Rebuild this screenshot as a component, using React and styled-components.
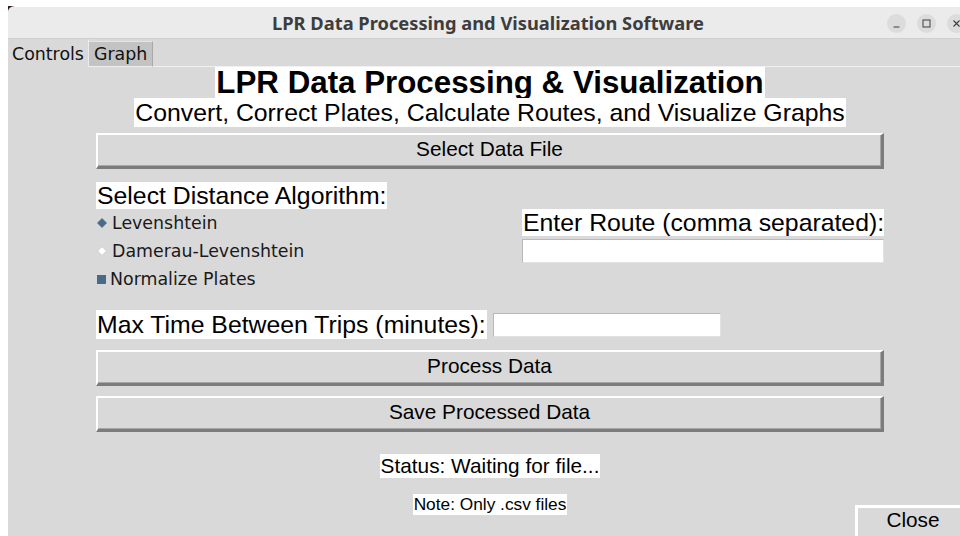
import React from 'react'
import styled, { createGlobalStyle } from 'styled-components'

const GlobalStyle = createGlobalStyle`
  html, body {
    margin: 0;
    padding: 0;
    background: #ffffff;
  }
  body {
    width: 960px;
    height: 536px;
    overflow: hidden;
  }
`

const Screen = styled.div`
  width: 960px;
  height: 536px;
  overflow: hidden;
  background: #ffffff;
  padding: 7px 0 0 8px;
  box-sizing: border-box;
`

const Window = styled.div`
  position: relative;
  width: 960px;
  height: 540px;
  background: #d9d9d9;
  display: flex;
  flex-direction: column;
`

const Corner = styled.svg`
  position: absolute;
  top: -1px;
  left: 0;
`

const TitleBar = styled.div`
  height: 31px;
  flex: none;
  background: #ebebeb;
  border-bottom: 1px solid #cfcfcf;
  display: grid;
  grid-template-columns: 1fr auto 1fr;
  align-items: center;
`

const WindowTitle = styled.div`
  grid-column: 2;
  font-family: "Noto Sans", "DejaVu Sans", sans-serif;
  font-weight: 700;
  font-size: 18.3px;
  color: #3d3d3d;
  white-space: nowrap;
`

const WindowButtons = styled.div`
  grid-column: 3;
  justify-self: end;
  display: flex;
  gap: 11px;
  padding: 2px 2px 0 0;
`

const RoundButton = styled.div`
  width: 19px;
  height: 19px;
  border-radius: 50%;
  background: #dcdcdc;
  display: flex;
  align-items: center;
  justify-content: center;
`

const TabStrip = styled.div`
  height: 28px;
  flex: none;
  display: flex;
  align-items: flex-end;
  box-shadow: inset 0 -1px 0 #f0f0f0;
`

const Tab = styled.div`
  height: ${p => (p.$active ? 28 : 26)}px;
  box-sizing: border-box;
  padding: 0 ${p => (p.$active ? 4 : 5)}px;
  background: ${p => (p.$active ? '#d9d9d9' : '#c3c3c3')};
  border-top: 1px solid ${p => (p.$active ? '#d9d9d9' : '#e4e4e4')};
  border-right: 1px solid ${p => (p.$active ? '#ececec' : '#a9a9a9')};
  border-bottom: ${p => (p.$active ? 'none' : '1px solid #f0f0f0')};
  font-family: "DejaVu Sans", sans-serif;
  font-size: 17.4px;
  color: #111;
  display: flex;
  align-items: center;
`

const Content = styled.div`
  flex: 1;
  display: flex;
  flex-direction: column;
  align-items: center;
  padding: 0 84px 0 88px;
`

const Heading = styled.div`
  background: #ffffff;
  font-family: "Liberation Sans", Arial, sans-serif;
  font-weight: 700;
  font-size: 31.3px;
  line-height: 31px;
  height: 31px;
  padding: 0 1px;
  color: #000;
  white-space: nowrap;
`

const Subheading = styled.div`
  background: #ffffff;
  font-family: "Liberation Sans", Arial, sans-serif;
  font-size: 24.8px;
  line-height: 29px;
  height: 29px;
  padding: 0 1px;
  color: #000;
  white-space: nowrap;
`

const RaisedButton = styled.div`
  align-self: stretch;
  height: 36px;
  margin-top: ${p => p.$gap}px;
  box-sizing: border-box;
  background: #d9d9d9;
  border-style: solid;
  border-width: 2px 3px 3px 2px;
  border-color: #ffffff #7c7c7c #7c7c7c #ffffff;
  box-shadow: inset -1px -1px 0 #a6a6a6;
  display: flex;
  align-items: center;
  justify-content: center;
  padding-bottom: 3px;
  font-family: "Liberation Sans", Arial, sans-serif;
  font-size: 20.8px;
  color: #000;
`

const Middle = styled.div`
  align-self: stretch;
  margin-top: 13px;
  display: flex;
  justify-content: space-between;
  align-items: flex-start;
`

const LeftColumn = styled.div`
  display: flex;
  flex-direction: column;
  align-items: flex-start;
`

const RightColumn = styled.div`
  width: 362px;
  padding-top: 27px;
  display: flex;
  flex-direction: column;
  align-items: stretch;
`

const FieldLabel = styled.div`
  background: #ffffff;
  font-family: "Liberation Sans", Arial, sans-serif;
  font-size: 24.8px;
  line-height: ${p => p.$h || 27}px;
  height: ${p => p.$h || 27}px;
  padding: 0 1px;
  color: #000;
  white-space: nowrap;
`

const Option = styled.div`
  height: 28px;
  display: flex;
  align-items: center;
  gap: ${p => (p.$check ? 4 : 5)}px;
  padding-left: 1px;
  font-family: "DejaVu Sans", sans-serif;
  font-size: 17.4px;
  color: #1a1a1a;
`

const Entry = styled.div`
  height: 24px;
  width: ${p => (p.$w ? `${p.$w}px` : 'auto')};
  margin-top: ${p => p.$top || 0}px;
  box-sizing: border-box;
  background: #ffffff;
  border: 1px solid #b9b9b9;
  border-right-color: #e2e2e2;
  border-bottom-color: #e2e2e2;
`

const TimeRow = styled.div`
  align-self: stretch;
  margin-top: 17px;
  display: flex;
  align-items: center;
  gap: 6px;
`

const Status = styled.div`
  margin-top: ${p => p.$gap}px;
  background: #ffffff;
  font-family: "Liberation Sans", Arial, sans-serif;
  font-size: ${p => p.$size}px;
  line-height: ${p => p.$h}px;
  height: ${p => p.$h}px;
  padding: 0 1px;
  color: #000;
  white-space: nowrap;
`

const CloseButton = styled.div`
  position: absolute;
  left: 847px;
  top: 498px;
  width: 113px;
  height: 36px;
  box-sizing: border-box;
  background: #d9d9d9;
  border-top: 3px solid #ffffff;
  border-left: 3px solid #ffffff;
  display: flex;
  justify-content: center;
  font-family: "Liberation Sans", Arial, sans-serif;
  font-size: 20.8px;
  line-height: 24px;
  color: #000;
`

const Diamond = ({ filled }) => (
  <svg width="10" height="10" viewBox="0 0 10 10">
    <path
      d="M5 0.5 L9.5 5 L5 9.5 L0.5 5 Z"
      fill={filled ? '#4a6a88' : '#ffffff'}
      stroke={filled ? '#4a6a88' : '#c8c8c8'}
      strokeWidth="0.8"
    />
  </svg>
)

const Square = () => (
  <svg width="9" height="9" viewBox="0 0 9 9">
    <rect x="0.5" y="0.5" width="8" height="8" fill="#4a6a88" stroke="#3e5a76" strokeWidth="0.8" />
  </svg>
)

const App = () => (
  <Screen>
    <GlobalStyle />
    <Window>
      <Corner width="8" height="5" viewBox="0 0 8 5">
        <path d="M0 0 H7 Q1 0.5 0 5 Z" fill="#2e1b2b" />
      </Corner>

      <TitleBar>
        <WindowTitle>LPR Data Processing and Visualization Software</WindowTitle>
        <WindowButtons>
          <RoundButton>
            <svg width="9" height="9" viewBox="0 0 9 9">
              <path d="M1.5 8 H7.5" stroke="#3c3c3c" strokeWidth="1" />
            </svg>
          </RoundButton>
          <RoundButton>
            <svg width="9" height="9" viewBox="0 0 9 9">
              <rect x="1" y="1" width="7" height="7" fill="none" stroke="#3c3c3c" strokeWidth="1" />
            </svg>
          </RoundButton>
          <RoundButton>
            <svg width="9" height="9" viewBox="0 0 9 9">
              <path d="M1.5 1.5 L7.5 7.5 M7.5 1.5 L1.5 7.5" stroke="#3c3c3c" strokeWidth="1.1" />
            </svg>
          </RoundButton>
        </WindowButtons>
      </TitleBar>

      <TabStrip>
        <Tab $active>Controls</Tab>
        <Tab>Graph</Tab>
      </TabStrip>

      <Content>
        <Heading>LPR Data Processing &amp; Visualization</Heading>
        <Subheading>Convert, Correct Plates, Calculate Routes, and Visualize Graphs</Subheading>

        <RaisedButton $gap={6}>Select Data File</RaisedButton>

        <Middle>
          <LeftColumn>
            <FieldLabel>Select Distance Algorithm:</FieldLabel>
            <Option>
              <Diamond filled />
              Levenshtein
            </Option>
            <Option>
              <Diamond />
              Damerau-Levenshtein
            </Option>
            <Option $check>
              <Square />
              Normalize Plates
            </Option>
          </LeftColumn>
          <RightColumn>
            <FieldLabel>Enter Route (comma separated):</FieldLabel>
            <Entry $top={3} />
          </RightColumn>
        </Middle>

        <TimeRow>
          <FieldLabel $h={29}>Max Time Between Trips (minutes):</FieldLabel>
          <Entry $w={228} />
        </TimeRow>

        <RaisedButton $gap={11}>Process Data</RaisedButton>
        <RaisedButton $gap={10}>Save Processed Data</RaisedButton>

        <Status $gap={22} $size={20.8} $h={24}>Status: Waiting for file...</Status>
        <Status $gap={16} $size={17.3} $h={21}>Note: Only .csv files</Status>
      </Content>

      <CloseButton>Close</CloseButton>
    </Window>
  </Screen>
)

export default App
